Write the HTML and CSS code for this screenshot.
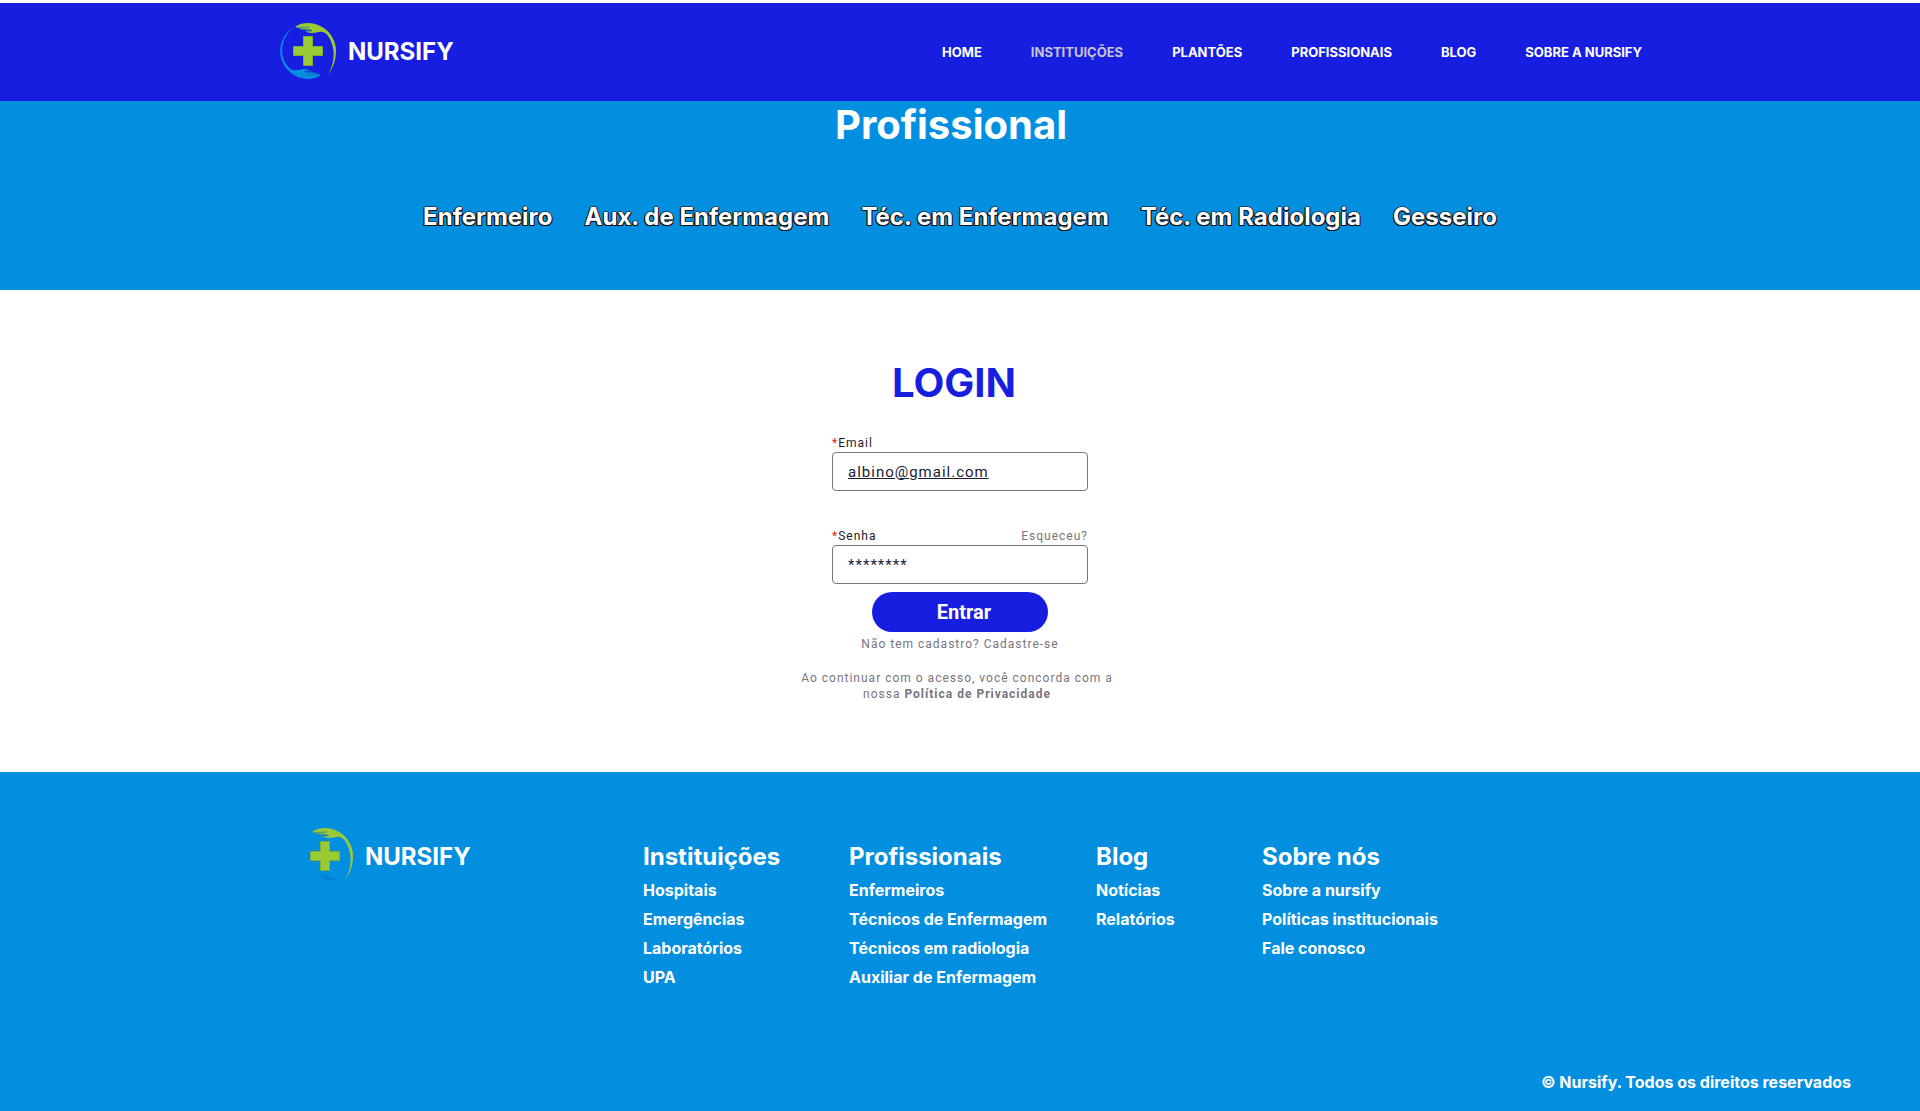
FILE: index.html
```html
<!DOCTYPE html>
<html lang="pt-BR">
<head>
<meta charset="utf-8">
<meta name="viewport" content="width=device-width, initial-scale=1">
<title>Nursify - Login</title>
<link rel="stylesheet" href="styles.css">
</head>
<body>
<svg class="sprite" aria-hidden="true">
  <symbol id="logo" viewBox="0 2 64 64">
    <path fill="#9acb34" stroke="#7fae35" stroke-width="1" d="M27.500 18.500h9v10h10v9h-10v10h-9v-10h-10v-9h10z"/>
    <path fill="#9acb34" d="M19.500 8.500C23 6 27.500 5 32 5A28 28 0 0 1 60 33C60 42 57 50 52.500 56C57.500 47 59 36 56.500 28C54.500 20 50.500 14.500 46.500 14C43 13 39.500 15.500 35 15C32.500 15 31 14 30.500 13L35 13.200L36 12C33.500 11.500 33 11 31 11C27 11.500 22.500 10.500 20.500 9.500Z"/>
    <path d="M22 9.500L34 9M24 11L34 11.500M29 12.800L36 13" stroke="#3f8f7e" stroke-width="1" fill="none"/>
    <path fill="#038fdf" d="M44.500 57.500C40 60 36 61 32 61A28 28 0 0 1 17 9.500C7.500 18 5 28 6.500 37C8 45 13 51.500 17.500 52C21 53 24.500 50.500 29 51C31.500 51 33 52 33.500 53L29 52.800L28 54C30.500 54.500 31 55 33 55C37 54.500 41.500 55.500 43.500 56.500Z"/>
    <path d="M42 56.500L30 57M40 55L30 54.500M35 53.200L28 53" stroke="#0b74c4" stroke-width="1" fill="none"/>
  </symbol>
</svg>

<header class="header">
  <div class="header-inner">
    <a class="brand" href="#"><svg class="brand-mark" aria-hidden="true"><use href="#logo"/></svg>NURSIFY</a>
    <nav class="nav">
      <a href="#">HOME</a>
      <a class="current" href="#">INSTITUIÇÕES</a>
      <a href="#">PLANTÕES</a>
      <a href="#">PROFISSIONAIS</a>
      <a href="#">BLOG</a>
      <a href="#">SOBRE A NURSIFY</a>
    </nav>
  </div>
</header>

<section class="hero">
  <h1>Profissional</h1>
  <nav class="roles">
    <a href="#">Enfermeiro</a>
    <a href="#">Aux. de Enfermagem</a>
    <a href="#">Téc. em Enfermagem</a>
    <a href="#">Téc. em Radiologia</a>
    <a href="#">Gesseiro</a>
  </nav>
</section>

<main class="main">
  <h2>LOGIN</h2>
  <form class="form">
    <div class="field">
      <div class="field-head"><label for="email"><span class="req">*</span>Email</label></div>
      <input class="email" id="email" type="email" value="albino@gmail.com">
    </div>
    <div class="field">
      <div class="field-head"><label for="senha"><span class="req">*</span>Senha</label><a href="#">Esqueceu?</a></div>
      <input id="senha" type="text" value="********">
    </div>
    <button type="submit">Entrar</button>
  </form>
  <p class="note"><a href="#">Não tem cadastro? Cadastre-se</a></p>
  <p class="note terms">Ao continuar com o acesso, você concorda com a<br>nossa <a class="policy" href="#">Política de Privacidade</a></p>
</main>

<footer class="footer">
  <div class="footer-inner">
    <a class="brand" href="#"><svg class="brand-mark" aria-hidden="true"><use href="#logo"/></svg>NURSIFY</a>
    <div class="column">
      <h3>Instituições</h3>
      <a href="#">Hospitais</a>
      <a href="#">Emergências</a>
      <a href="#">Laboratórios</a>
      <a href="#">UPA</a>
    </div>
    <div class="column">
      <h3>Profissionais</h3>
      <a href="#">Enfermeiros</a>
      <a href="#">Técnicos de Enfermagem</a>
      <a href="#">Técnicos em radiologia</a>
      <a href="#">Auxiliar de Enfermagem</a>
    </div>
    <div class="column">
      <h3>Blog</h3>
      <a href="#">Notícias</a>
      <a href="#">Relatórios</a>
    </div>
    <div class="column">
      <h3>Sobre nós</h3>
      <a href="#">Sobre a nursify</a>
      <a href="#">Políticas institucionais</a>
      <a href="#">Fale conosco</a>
    </div>
  </div>
  <p class="copyright">© Nursify. Todos os direitos reservados</p>
</footer>
</body>
</html>
```
FILE: styles.css
```css
* { box-sizing: border-box; }
body {
  margin: 0;
  min-height: 100vh;
  padding-top: 3px;
  display: flex;
  flex-direction: column;
  background: #fff;
  color: #fff;
  font-family: Inter, sans-serif;
  font-weight: 700;
}
h1, h2, h3, p { margin: 0; }
a { color: inherit; text-decoration: none; }
.sprite { position: absolute; width: 0; height: 0; }

.header { background: #171ee0; }
.header-inner {
  max-width: 1368px;
  min-height: 98px;
  margin: 0 auto;
  padding-right: 2px;
  display: flex;
  align-items: center;
  justify-content: space-between;
}
.brand {
  display: flex;
  align-items: center;
  gap: 8px;
  font-size: 24px;
  line-height: 32px;
}
.brand-mark { width: 64px; height: 64px; }
.nav {
  display: flex;
  flex-wrap: wrap;
  gap: 49px;
  font-size: 13px;
  line-height: 16px;
}
.nav .current { color: #c6c3d0; }

.hero {
  padding-bottom: 57px;
  background: #038fdf;
  text-align: center;
}
.hero h1 {
  padding-right: 18px;
  font-size: 40px;
  line-height: 48px;
}
.roles {
  margin-top: 51px;
  display: flex;
  flex-wrap: wrap;
  justify-content: center;
  gap: 32px;
  font-size: 24px;
  line-height: 33px;
  text-shadow: 1px 0 #111, -1px 0 #111, 0 1px #111, 0 -1px #1118, 1px 1px #111, -1px 1px #111;
}

.main {
  flex: 1;
  padding: 69px 16px 56px;
  display: flex;
  flex-direction: column;
  align-items: center;
  font-family: Roboto, sans-serif;
  font-weight: 400;
  font-size: 12px;
  line-height: 16px;
  letter-spacing: 1px;
  color: #79747e;
}
.main h2 {
  padding-right: 12px;
  color: #171ee0;
  font: 700 40px/48px Inter, sans-serif;
  letter-spacing: normal;
}
.form {
  width: 256px;
  margin-top: 28px;
  display: flex;
  flex-direction: column;
  align-items: center;
}
.field { width: 100%; margin-bottom: 37px; }
.field:nth-child(2) { margin-bottom: 8px; }
.field-head { display: flex; justify-content: space-between; padding-bottom: 1px; }
.field label { color: #1c1b1f; }
.field .req { color: #f01818; }
.field input {
  display: block;
  width: 100%;
  height: 39px;
  padding: 0 15px;
  border: 1px solid #79747e;
  border-radius: 4px;
  background: #fff;
  color: #1c1b3a;
  font: 400 15px/24px Roboto, sans-serif;
  letter-spacing: inherit;
}
.field .email { text-decoration: underline; }
.form button {
  width: 176px;
  height: 40px;
  padding: 0 0 0 8px;
  border: 0;
  border-radius: 20px;
  background: #171ee0;
  color: #fff;
  font: 700 20px/24px Roboto, sans-serif;
}
.note { margin-top: 4px; text-align: center; }
.terms { margin-top: 18px; padding-right: 6px; }
.policy { font-weight: 700; }

.footer {
  padding: 53px 69px 17px;
  background: #038fdf;
}
.footer-inner {
  max-width: 1334px;
  min-height: 245px;
  margin: 0 auto;
  display: grid;
  grid-template-columns: 350px 206px 247px 166px 1fr;
  align-items: start;
}
.column {
  padding-top: 16px;
  display: flex;
  flex-direction: column;
  gap: 5px;
  font-size: 16px;
  line-height: 24px;
}
.column h3 { font-size: 24px; line-height: 32px; }
.copyright { text-align: right; font-size: 16px; line-height: 24px; }
```
